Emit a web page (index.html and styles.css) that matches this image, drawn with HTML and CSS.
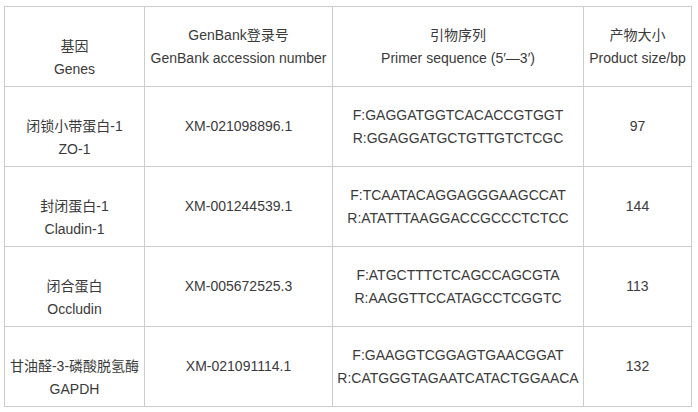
FILE: index.html
```html
<!DOCTYPE html>
<html>
<head>
<meta charset="utf-8">
<link rel="stylesheet" href="styles.css">
</head>
<body>
<table class="primers">
  <colgroup>
    <col class="c-gene">
    <col class="c-acc">
    <col class="c-primer">
    <col class="c-size">
  </colgroup>
  <tr>
    <td class="gene">基因<br>Genes</td>
    <td>GenBank登录号<br>GenBank accession number</td>
    <td>引物序列<br>Primer sequence (5′—3′)</td>
    <td>产物大小<br>Product size/bp</td>
  </tr>
  <tr>
    <td class="gene">闭锁小带蛋白-1<br>ZO-1</td>
    <td>XM-021098896.1</td>
    <td>F:GAGGATGGTCACACCGTGGT<br>R:GGAGGATGCTGTTGTCTCGC</td>
    <td>97</td>
  </tr>
  <tr>
    <td class="gene">封闭蛋白-1<br>Claudin-1</td>
    <td>XM-001244539.1</td>
    <td>F:TCAATACAGGAGGGAAGCCAT<br>R:ATATTTAAGGACCGCCCTCTCC</td>
    <td>144</td>
  </tr>
  <tr>
    <td class="gene">闭合蛋白<br>Occludin</td>
    <td>XM-005672525.3</td>
    <td>F:ATGCTTTCTCAGCCAGCGTA<br>R:AAGGTTCCATAGCCTCGGTC</td>
    <td>113</td>
  </tr>
  <tr>
    <td class="gene">甘油醛-3-磷酸脱氢酶<br>GAPDH</td>
    <td>XM-021091114.1</td>
    <td>F:GAAGGTCGGAGTGAACGGAT<br>R:CATGGGTAGAATCATACTGGAACA</td>
    <td>132</td>
  </tr>
</table>
</body>
</html>
```
FILE: styles.css
```css
html, body {
  background: #ffffff;
}
body {
  margin: 6px 0 0 4px;
  font-family: Arial, "Liberation Sans", "Noto Sans CJK SC", sans-serif;
  font-size: 14px;
  line-height: 23px;
  color: #3a3a3a;
}
.primers {
  border-collapse: collapse;
  table-layout: fixed;
  width: 687px;
}
.c-gene { width: 140px; }
.c-acc { width: 188px; }
.c-primer { width: 251px; }
.c-size { width: 108px; }
.primers tr {
  height: 80px;
}
.primers td {
  border: 1px solid #cccccc;
  text-align: center;
  vertical-align: middle;
  padding: 0;
}
.primers td.gene {
  padding-top: 23px;
}
```
